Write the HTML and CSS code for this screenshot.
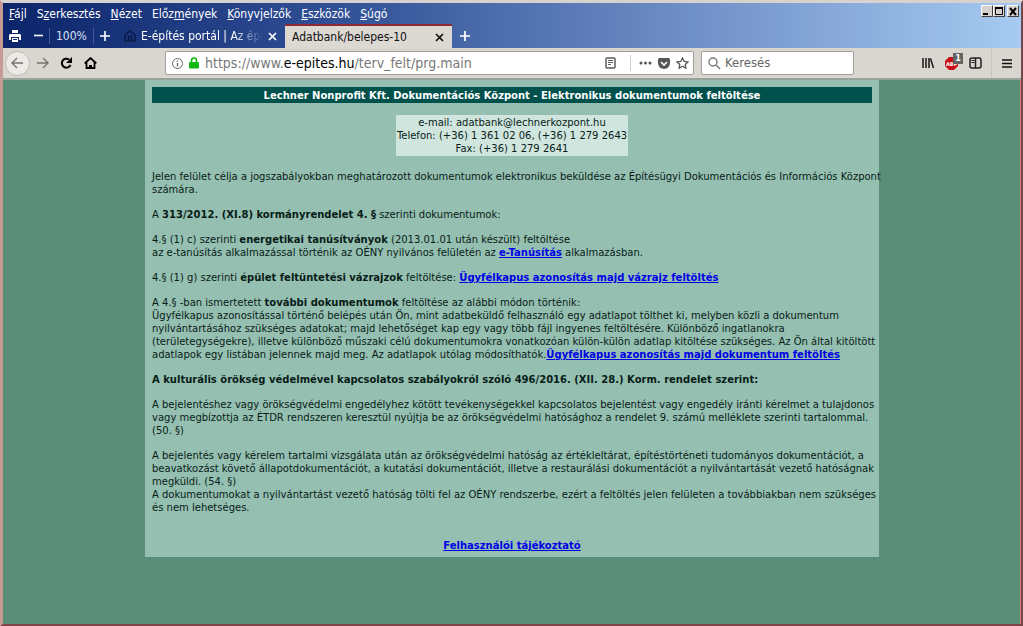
FILE: index.html
```html
<!DOCTYPE html>
<html lang="hu">
<head>
<meta charset="utf-8">
<title>Adatbank/belepes-10</title>
<link rel="stylesheet" href="styles.css">
</head>
<body>
<div class="window">
  <header class="titlebar">
    <nav class="menubar">
      <button class="menu"><u>F</u>ájl</button>
      <button class="menu">S<u>z</u>erkesztés</button>
      <button class="menu"><u>N</u>ézet</button>
      <button class="menu">Előz<u>m</u>ények</button>
      <button class="menu"><u>K</u>önyvjelzők</button>
      <button class="menu"><u>E</u>szközök</button>
      <button class="menu"><u>S</u>úgó</button>
      <div class="controls">
        <button class="control" aria-label="Kis méret"><svg width="10" height="9"><path d="M1 7h5" stroke="#000" stroke-width="2"/></svg></button>
        <button class="control" aria-label="Teljes méret"><svg width="10" height="9"><path d="M1.500 1v6.500h7V1" fill="none" stroke="#000"/><path d="M1 1h8" stroke="#000" stroke-width="2"/></svg></button>
        <button class="control close" aria-label="Bezárás"><svg width="10" height="9"><path d="M2 1l6 7M8 1L2 8" stroke="#000" stroke-width="2"/></svg></button>
      </div>
    </nav>
    <div class="tabs">
      <div class="zoom">
        <button class="icon" aria-label="Nyomtatás"><svg width="12" height="12" fill="#fff"><path d="M3 0h6v3H3zM1 4h10l1 1v5h-2V7H2v3H0V5z"/><path d="M3 8h6v4H3z"/><path d="M4 9.500h4" stroke="#16317c"/></svg></button>
        <button class="icon minus" aria-label="Kicsinyítés"><svg width="11" height="12"><path d="M1 5.500h9" stroke="#fff" stroke-width="1.600"/></svg></button>
        <span class="percent">100%</span>
        <button class="icon" aria-label="Nagyítás"><svg width="12" height="12"><path d="M1 6h10M6 1v10" stroke="#fff" stroke-width="1.600"/></svg></button>
      </div>
      <div class="tab">
        <svg class="favicon" width="12" height="12" fill="none" stroke="#0a1a48" stroke-width="1.500"><path d="M1 5l5-4 5 4v6H1z"/><path d="M4.500 10V6.500h3V10"/></svg>
        <span class="tab-title fading">E-építés portál | Az épí</span>
        <button class="icon" aria-label="Lap bezárása"><svg width="9" height="9"><path d="M1 1l7 7M8 1L1 8" stroke="#fff" stroke-width="1.700"/></svg></button>
      </div>
      <div class="tab active">
        <span class="tab-title">Adatbank/belepes-10</span>
        <button class="icon" aria-label="Lap bezárása"><svg width="9" height="9"><path d="M1 1l7 7M8 1L1 8" stroke="#111" stroke-width="1.700"/></svg></button>
      </div>
      <button class="icon newtab" aria-label="Új lap"><svg width="12" height="12"><path d="M1 6h10M6 1v10" stroke="#fff" stroke-width="1.700"/></svg></button>
    </div>
  </header>
  <div class="toolbar">
    <div class="navigation">
      <button class="icon back" aria-label="Vissza"><svg width="13" height="12" fill="none" stroke="#77756f" stroke-width="1.400"><path d="M12 6H1M6 1L1 6l5 5"/></svg></button>
      <button class="icon" aria-label="Előre"><svg width="13" height="12" fill="none" stroke="#77756f" stroke-width="1.400"><path d="M1 6h11M7 1l5 5-5 5"/></svg></button>
      <button class="icon" aria-label="Frissítés"><svg width="13" height="12" fill="none" stroke="#000" stroke-width="2"><path d="M10.500 8A4.500 4.500 0 1 1 9 2.500"/><path d="M12 0v6H6z" fill="#000" stroke="none"/></svg></button>
      <button class="icon" aria-label="Kezdőlap"><svg width="13" height="12" fill="none" stroke="#000" stroke-width="1.800"><path d="M.700 6.500L6.500 1l5.800 5.500M2.500 5.500V11h8V5.500"/><path d="M5 8h3v3H5z" fill="#000" stroke="none"/></svg></button>
    </div>
    <div class="address">
      <svg width="11" height="11" fill="none" stroke="#686868"><circle cx="5.500" cy="5.500" r="5"/><path d="M5.500 2.500v1.300M5.500 5v3.500" stroke-width="1.300"/></svg>
      <svg width="10" height="12"><path d="M2.500 6V3.500a2.500 2.500 0 0 1 5 0V6" fill="none" stroke="#12b812" stroke-width="1.600"/><rect y="5" width="10" height="6.500" rx="1" fill="#12b812"/></svg>
      <div class="url" role="textbox" aria-label="Cím" contenteditable="true" spellcheck="false">https://www.<b>e-epites.hu</b>/terv_felt/prg.main</div>
      <button class="icon reader" aria-label="Olvasó nézet"><svg width="11" height="12" fill="none" stroke="#5d5d5d"><rect x="1" y="1" width="9" height="10" rx="1" stroke-width="1.500"/><path d="M3 3.500h5M3 5.500h5M3 7.500h3"/></svg></button>
      <button class="icon more" aria-label="Műveletek"><svg width="13" height="4" fill="#555"><circle cx="2" cy="2" r="1.500"/><circle cx="6.500" cy="2" r="1.500"/><circle cx="11" cy="2" r="1.500"/></svg></button>
      <button class="icon" aria-label="Pocket"><svg width="12" height="11"><path d="M1.500 0h9Q12 0 12 1.500V5A6 6 0 0 1 0 5V1.500Q0 0 1.500 0z" fill="#555"/><path d="M3 4l3 3 3-3" fill="none" stroke="#fff" stroke-width="1.600"/></svg></button>
      <button class="icon" aria-label="Könyvjelző"><svg width="13" height="12"><path d="M6.500 1l1.700 3.500 3.800.5-2.800 2.500.7 3.700-3.400-1.900-3.400 1.900.7-3.700L1 5l3.800-.5z" fill="none" stroke="#555" stroke-width="1.300"/></svg></button>
    </div>
    <label class="search">
      <svg width="13" height="13" fill="none" stroke="#777" stroke-width="1.400"><circle cx="5" cy="5" r="4"/><path d="M8 8l4 4"/></svg>
      <input type="text" placeholder="Keresés" aria-label="Keresés">
    </label>
    <div class="tools">
      <button class="icon" aria-label="Könyvtár"><svg width="12" height="12" stroke="#222" stroke-width="1.600"><path d="M1 1v10M4 1v10M7 1v10M8.500 1.500L11.500 11"/></svg></button>
      <button class="icon blocker" aria-label="Adblock Plus"><svg width="13" height="13"><path d="M4 0h5l4 4v5l-4 4H4L0 9V4z" fill="#c70d16"/><text x="1" y="9" class="abp">ABP</text></svg><span class="count">1</span></button>
      <button class="icon" aria-label="Oldalsáv"><svg width="13" height="12" fill="none" stroke="#222" stroke-width="1.500"><rect x="1" y="1" width="11" height="10" rx="2"/><path d="M6.500 1v10"/><path d="M2.500 3.500h3M2.500 5.500h3" stroke-width="1"/></svg></button>
      <button class="icon hamburger" aria-label="Menü"><svg width="10" height="11" stroke="#111" stroke-width="1.600"><path d="M0 2h10M0 5.500h10M0 9h10"/></svg></button>
    </div>
  </div>
  <main class="page">
    <article class="sheet">
      <h1 class="heading">Lechner Nonprofit Kft. Dokumentációs Központ - Elektronikus dokumentumok feltöltése</h1>
      <address class="contact">e-mail: adatbank@lechnerkozpont.hu<br>Telefon: (+36) 1 361 02 06, (+36) 1 279 2643<br>Fax: (+36) 1 279 2641</address>
      <p>Jelen felület célja a jogszabályokban meghatározott dokumentumok elektronikus beküldése az Építésügyi Dokumentációs és Információs Központ<br>számára.</p>
      <p>A <b>313/2012. (XI.8) kormányrendelet 4. §</b> szerinti dokumentumok:</p>
      <p>4.§ (1) c) szerinti <b>energetikai tanúsítványok</b> (2013.01.01 után készült) feltöltése<br>az e-tanúsítás alkalmazással történik az OÉNY nyilvános felületén az <a href="#">e-Tanúsítás</a> alkalmazásban.</p>
      <p>4.§ (1) g) szerinti <b>épület feltüntetési vázrajzok</b> feltöltése: <a href="#">Ügyfélkapus azonosítás majd vázrajz feltöltés</a></p>
      <p>A 4.§ -ban ismertetett <b>további dokumentumok</b> feltöltése az alábbi módon történik:<br>Ügyfélkapus azonosítással történő belépés után Ön, mint adatbeküldő felhasználó egy adatlapot tölthet ki, melyben közli a dokumentum<br>nyilvántartásához szükséges adatokat; majd lehetőséget kap egy vagy több fájl ingyenes feltöltésére. Különböző ingatlanokra<br>(területegységekre), illetve különböző műszaki célú dokumentumokra vonatkozóan külön-külön adatlap kitöltése szükséges. Az Ön által kitöltött<br>adatlapok egy listában jelennek majd meg. Az adatlapok utólag módosíthatók.<a href="#">Ügyfélkapus azonosítás majd dokumentum feltöltés</a></p>
      <p><b>A kulturális örökség védelmével kapcsolatos szabályokról szóló 496/2016. (XII. 28.) Korm. rendelet szerint:</b></p>
      <p>A bejelentéshez vagy örökségvédelmi engedélyhez kötött tevékenységekkel kapcsolatos bejelentést vagy engedély iránti kérelmet a tulajdonos<br>vagy megbízottja az ÉTDR rendszeren keresztül nyújtja be az örökségvédelmi hatósághoz a rendelet 9. számú melléklete szerinti tartalommal.<br>(50. §)</p>
      <p>A bejelentés vagy kérelem tartalmi vizsgálata után az örökségvédelmi hatóság az értékleltárat, építéstörténeti tudományos dokumentációt, a<br>beavatkozást követő állapotdokumentációt, a kutatási dokumentációt, illetve a restaurálási dokumentációt a nyilvántartását vezető hatóságnak<br>megküldi. (54. §)<br>A dokumentumokat a nyilvántartást vezető hatóság tölti fel az OÉNY rendszerbe, ezért a feltöltés jelen felületen a továbbiakban nem szükséges<br>és nem lehetséges.</p>
      <p class="guide"><a href="#">Felhasználói tájékoztató</a></p>
    </article>
  </main>
</div>
</body>
</html>
```
FILE: styles.css
```css
* { box-sizing: border-box; }
body { margin: 0; }
button { margin: 0; padding: 0; border: 0; background: none; color: inherit; font: inherit; }
svg { display: block; flex: none; }

.window {
  display: flex;
  flex-direction: column;
  min-height: 100vh;
  border: solid;
  border-width: 3px 2px 2px 3px;
  border-color: #d6d3ce #74474a #804448 #c79a96;
  font: 12px/16px "DejaVu Sans Condensed", "DejaVu Sans", sans-serif;
}
.titlebar {
  height: 45px;
  color: #fff;
  background: linear-gradient(90deg, #0b246a, #315096 33%, #7090c8 68%, #a6caf0);
}
.menubar { display: flex; height: 21px; padding-left: 6px; gap: 10px; align-items: center; }
.controls { display: flex; margin-left: auto; align-self: flex-start; padding: 2px 2px 0 0; }
.control {
  display: grid;
  place-items: center;
  width: 12px;
  height: 12px;
  background: #d6d3ce;
  border: 1px solid;
  border-color: #fff #404040 #404040 #fff;
}
.control.close { margin-left: 2px; }
.tabs { display: flex; height: 24px; align-items: stretch; }
.icon { display: grid; place-items: center; flex: none; }
.zoom { display: flex; align-items: center; gap: 12px; width: 113px; padding-left: 6px; }
.percent {
  margin: 0 -7px;
  padding: 0 6px;
  border: solid #40589a;
  border-width: 0 1px;
  color: #dce3f5;
}
.tab { display: flex; align-items: center; gap: 5px; width: 169px; padding: 0 8px; }
.favicon { flex: none; }
.tab-title { flex: 1; overflow: hidden; white-space: nowrap; }
.fading { -webkit-mask-image: linear-gradient(90deg, #000 75%, transparent); mask-image: linear-gradient(90deg, #000 75%, transparent); }
.active { width: 167px; padding: 0 8px 0 7px; color: #111; background: #dcd8d2; border-top: 2px solid #8c2c35; }
.newtab { width: 26px; }

.toolbar {
  display: flex;
  align-items: center;
  height: 32px;
  padding: 0 9px 0 2px;
  background: #d9d5cf;
  border-bottom: 2px solid #98a49b;
}
.navigation { display: flex; align-items: center; gap: 11px; width: 160px; }
.back { width: 25px; height: 25px; margin-right: -5px; border: 1px solid #bdb9b3; border-radius: 50%; background: #eceae6; }
.address, .search {
  display: flex;
  align-items: center;
  height: 24px;
  border: 1px solid #a29f9b;
  border-radius: 2px;
  background: #fff;
}
.address { flex: 517 1 0; gap: 6px; padding: 0 4px 0 6px; }
.url { flex: 1; min-width: 0; overflow: hidden; white-space: nowrap; font-size: 14px; line-height: 20px; color: #777; outline: 0; }
.url b { font-weight: normal; color: #000; }
.reader { padding-right: 8px; }
.more { height: 16px; padding-left: 8px; border-left: 1px solid #d0d0d0; }
.search { flex: 139 1 0; gap: 4px; margin-left: 7px; padding: 0 6px; }
.search input { width: 100%; min-width: 0; padding: 0; border: 0; outline: 0; font: inherit; font-size: 13px; }
.search input::placeholder { color: #666; opacity: 1; }
.tools { display: flex; align-items: center; justify-content: flex-end; gap: 11px; flex: 158 1 0; }
.blocker { position: relative; }
.abp { font: bold 5px "DejaVu Sans", sans-serif; fill: #fff; }
.count {
  position: absolute;
  top: -4px;
  left: 8px;
  width: 10px;
  height: 11px;
  background: #636363;
  color: #fff;
  font-size: 9px;
  font-weight: bold;
  line-height: 11px;
}
.hamburger { height: 30px; margin-left: -2px; padding-left: 10px; border-left: 1px solid #c9c5bf; }

.page { flex: 1; padding: 0 141px 0 142px; background: #5a8e79; border-right: 1px solid #e07a70; }
.sheet {
  height: fit-content;
  padding: 7px 7px 5px;
  background: #95bfb0;
  color: #081c18;
  font: 10px/13px "DejaVu Sans", sans-serif;
}
.heading {
  margin: 0 0 12px;
  padding: 2px 0 1px;
  background: #00504c;
  color: #fff;
  font-size: 10px;
  line-height: 13px;
  text-align: center;
}
.contact {
  width: fit-content;
  margin: 0 auto 14px;
  padding: 1px;
  background: #cfe5dd;
  font-style: normal;
  text-align: center;
}
.sheet p { margin: 0 0 12px; white-space: nowrap; }
.sheet .guide { margin: 25px 0 0; text-align: center; }
.sheet a { color: #0000e6; font-weight: bold; }
```
